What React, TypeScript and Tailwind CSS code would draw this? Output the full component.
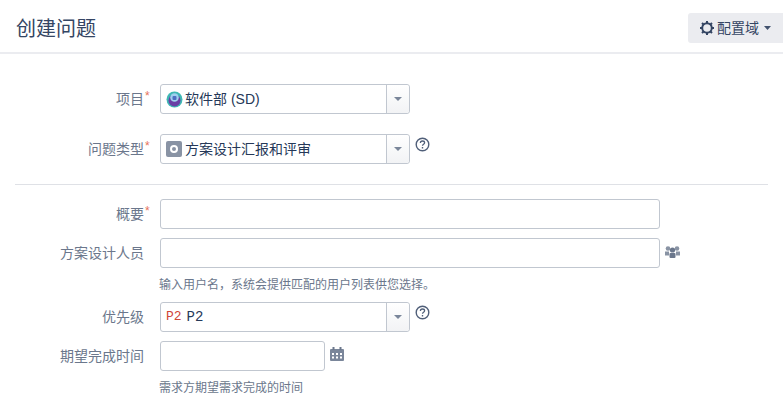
const FONT = "font-['Liberation_Sans','Noto_Sans_CJK_SC',sans-serif]";

function Arrow() {
  return (
    <div className="flex w-[23px] shrink-0 items-center justify-center rounded-r-[3px] border-l border-[#c1c7d0] bg-gradient-to-b from-white to-[#f2f3f5] pr-[1px]">
      <svg width="8" height="4" viewBox="0 0 8 4">
        <path d="M0 0h8L4 4z" fill="#7a869a" />
      </svg>
    </div>
  );
}

function HelpIcon() {
  return (
    <svg width="15" height="15" viewBox="0 0 15 15" className="-ml-[11px] mt-[3px] shrink-0">
      <circle cx="7.5" cy="7.5" r="6.3" fill="none" stroke="#505f79" strokeWidth="1.4" />
      <path d="M5.4 6c0-1.3 1-2 2.1-2s2.1.7 2.100 1.800c0 1.500-2.100 1.400-2.100 3" fill="none" stroke="#505f79" strokeWidth="1.300" />
      <rect x="6.800" y="10" width="1.400" height="1.500" fill="#505f79" />
    </svg>
  );
}

function Label({ text, required }: { text: string; required?: boolean }) {
  return (
    <div className="relative w-[144px] shrink-0 pt-[5px] text-right text-[14px] leading-[20px] text-[#6b778c]">
      {text}
      {required && <span className="absolute left-[145px] top-[2px] text-[12px] text-[#de350b] opacity-70">*</span>}
    </div>
  );
}

function Select({ children }: { children: React.ReactNode }) {
  return (
    <div className="flex h-[30px] w-[250px] shrink-0 rounded-[3px] border border-[#c1c7d0] bg-white">
      <div className="flex flex-1 items-center gap-[2px] pl-[5px] text-[14px] text-[#253858]">{children}</div>
      <Arrow />
    </div>
  );
}

function Input({ width }: { width: string }) {
  return <div className={`h-[30px] rounded-[3px] border border-[#c1c7d0] bg-white ${width}`} />;
}

function Row({ className, children }: { className: string; children: React.ReactNode }) {
  return <div className={`flex ${className}`}>{children}</div>;
}

function Help({ text, className }: { text: string; className: string }) {
  return <div className={`pl-[159px] text-[12px] leading-[16px] text-[#6b778c] ${className}`}>{text}</div>;
}

export default function App() {
  return (
    <div className={`h-[402px] w-[783px] overflow-hidden bg-white ${FONT}`}>
      {/* Header */}
      <div className="flex h-[54px] items-start justify-between border-b-2 border-[#ebecf0] pl-[16px] pt-[13px]">
        <h1 className="pt-[2px] text-[20px] font-normal leading-[28px] text-[#344563]">创建问题</h1>
        <div className="flex h-[30px] w-[95px] items-center rounded-l-[3px] bg-[#ebecf0] pl-[11px] text-[14px] text-[#344563]">
          <svg width="16" height="16" viewBox="0 0 16 16" className="mr-[2px]">
            <circle cx="8" cy="8" r="4.800" fill="none" stroke="#344563" strokeWidth="2" />
            <path d="M8 1v2.500M8 12.500V15M1 8h2.500M12.500 8H15M3 3l1.800 1.800M11.200 11.200L13 13M13 3l-1.800 1.800M4.800 11.200L3 13" stroke="#344563" strokeWidth="2" />
          </svg>
          配置域
          <svg width="7" height="4" viewBox="0 0 7 4" className="ml-[5px]">
            <path d="M0 0h7L3.500 4z" fill="#42526e" />
          </svg>
        </div>
      </div>

      {/* Project and type */}
      <Row className="mt-[30px] gap-[16px]">
        <Label text="项目" required />
        <Select>
          <svg width="17" height="17" viewBox="0 0 17 17" className="shrink-0">
            <circle cx="8.500" cy="8.500" r="8" fill="#3fb8b4" />
            <circle cx="8.500" cy="9.500" r="6" fill="#6a3fa5" />
            <circle cx="8.500" cy="6.500" r="4.300" fill="#9fd0ee" />
            <rect x="6.500" y="5" width="4" height="4" rx="1" fill="#4c6fc0" />
          </svg>
          软件部 (SD)
        </Select>
      </Row>
      <Row className="mt-[20px] gap-[16px]">
        <Label text="问题类型" required />
        <Select>
          <svg width="16" height="16" viewBox="0 0 16 16" className="mr-[1px] shrink-0">
            <rect width="16" height="16" rx="2" fill="#8993a4" />
            <circle cx="8" cy="8" r="3" fill="none" stroke="#fff" strokeWidth="2" />
          </svg>
          方案设计汇报和评审
        </Select>
        <HelpIcon />
      </Row>

      <div className="mx-[15px] mt-[20px] w-[753px] border-t border-[#dfe1e6]" />

      {/* Summary and assignee */}
      <Row className="mt-[14px] gap-[16px]">
        <Label text="概要" required />
        <Input width="w-[500px]" />
      </Row>
      <Row className="mt-[9px] gap-[16px]">
        <Label text="方案设计人员" />
        <Input width="w-[500px]" />
        <svg width="15" height="13" viewBox="0 0 15 13" className="-ml-[11px] mt-[7px] shrink-0">
          <g fill="#8993a4">
            <circle cx="3" cy="3.500" r="2.300" />
            <circle cx="12" cy="3.500" r="2.300" />
            <path d="M0 6.500h4v4H0zM11 6.500h4v4h-4z" />
            <circle cx="7.500" cy="5" r="2.600" fill="#6b778c" />
            <rect x="4.500" y="8" width="6" height="5" rx="1" fill="#6b778c" />
          </g>
        </svg>
      </Row>
      <Help text="输入用户名，系统会提供匹配的用户列表供您选择。" className="mt-[9px]" />

      {/* Priority and due date */}
      <Row className="mt-[9px] gap-[16px]">
        <Label text="优先级" />
        <Select>
          <span className="font-['Liberation_Mono',monospace] text-[13px] text-[#d04437]">P2</span>
          <span className="ml-[3px] font-['Liberation_Mono',monospace] text-[14px]">P2</span>
        </Select>
        <HelpIcon />
      </Row>
      <Row className="mt-[9px] gap-[16px]">
        <Label text="期望完成时间" />
        <Input width="w-[165px]" />
        <svg width="14" height="14" viewBox="0 0 14 14" className="-ml-[11px] mt-[6px] shrink-0">
          <path d="M1 2h12a1 1 0 011 1v10a1 1 0 01-1 1H1a1 1 0 01-1-1V3a1 1 0 011-1z" fill="#7a869a" />
          <rect x="2.500" y="0" width="2" height="3" fill="#6b778c" />
          <rect x="9.500" y="0" width="2" height="3" fill="#6b778c" />
          <path d="M2 6h2v2H2zM6 6h2v2H6zM10 6h2v2h-2zM2 9.500h2v2H2zM6 9.500h2v2H6zM10 9.500h2v2h-2z" fill="#fff" />
        </svg>
      </Row>
      <Help text="需求方期望需求完成的时间" className="mt-[9px]" />
    </div>
  );
}
